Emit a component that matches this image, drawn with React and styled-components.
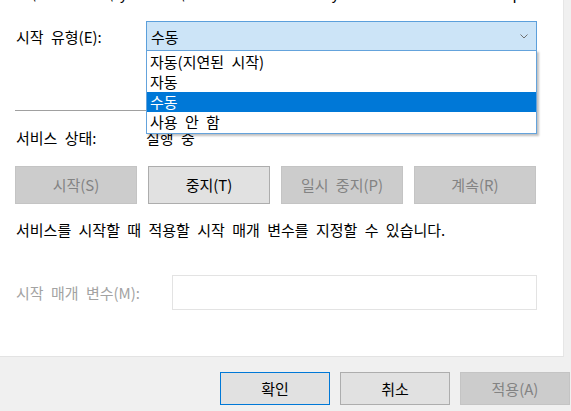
import styled, { createGlobalStyle } from "styled-components";

const GlobalStyle = createGlobalStyle`
  html, body {
    margin: 0;
    padding: 0;
    background: #f0f0f0;
  }
  body {
    font-family: "Noto Sans CJK KR", "Noto Sans", sans-serif;
    font-size: 15px;
    word-spacing: 4px;
    color: #000;
  }
`;

const startTypes = ["자동(지연된 시작)", "자동", "수동", "사용 안 함"];

const serviceButtons = [
  { label: "시작(S)", disabled: true },
  { label: "중지(T)", disabled: false },
  { label: "일시 중지(P)", disabled: true },
  { label: "계속(R)", disabled: true },
];

const App = () => {
  return (
    <>
      <GlobalStyle />
      <Window>
        <TabPage>
          <PathLine>C:\WINDOWS\system32\svchost.exe -k LocalSystemNetworkRestricted -p</PathLine>

          <FieldRow $top={18}>
            <Label>시작 유형(E):</Label>
            <Combo>
              <span>수동</span>
              <Chevron viewBox="0 0 8 5">
                <polyline points="0.5,0.5 4,4 7.5,0.5" />
              </Chevron>
              <DropList>
                {startTypes.map((t) => (
                  <DropItem key={t} $selected={t === "수동"}>
                    {t}
                  </DropItem>
                ))}
              </DropList>
            </Combo>
          </FieldRow>

          <Separator />

          <StatusRow>
            <Label>서비스 상태:</Label>
            <span>실행 중</span>
          </StatusRow>

          <ButtonRow>
            {serviceButtons.map((b) => (
              <ActionButton key={b.label} disabled={b.disabled}>
                {b.label}
              </ActionButton>
            ))}
          </ButtonRow>

          <Description>
            서비스를 시작할 때 적용할 시작 매개 변수를 지정할 수 있습니다.
          </Description>

          <FieldRow $top={35}>
            <Label $width={157} $muted>
              시작 매개 변수(M):
            </Label>
            <ParamInput />
          </FieldRow>
        </TabPage>

        <Footer>
          <DialogButton $primary>확인</DialogButton>
          <DialogButton>취소</DialogButton>
          <DialogButton disabled>적용(A)</DialogButton>
        </Footer>
      </Window>
    </>
  );
};

export default App;

/* ---------------- styled-components ---------------- */

const Window = styled.div`
  width: 571px;
  height: 411px;
  overflow: hidden;
  display: flex;
  flex-direction: column;
`;

const TabPage = styled.div`
  width: 564px;
  height: 357px;
  box-sizing: border-box;
  background: #fff;
  border-right: 1px solid #e6e6e6;
  border-bottom: 1px solid #e3e3e3;
  padding-left: 15px;
  display: flex;
  flex-direction: column;
  overflow: hidden;
  flex-shrink: 0;
`;

const PathLine = styled.div`
  margin-top: -17px;
  height: 20px;
  line-height: 20px;
  padding-left: 1px;
  white-space: nowrap;
  word-spacing: 0;
`;

const FieldRow = styled.div`
  display: flex;
  align-items: center;
  margin-top: ${(p) => p.$top}px;
`;

const Label = styled.div`
  width: ${(p) => p.$width || 131}px;
  flex-shrink: 0;
  padding-left: 1px;
  box-sizing: border-box;
  white-space: nowrap;
  color: ${(p) => (p.$muted ? "#a3a3a3" : "#000")};
`;

const Combo = styled.div`
  position: relative;
  width: 391px;
  height: 30px;
  box-sizing: border-box;
  border: 1px solid #5b9fdb;
  background: #cce4f7;
  display: flex;
  align-items: center;
  justify-content: space-between;
  padding: 0 8px 0 4px;
`;

const Chevron = styled.svg`
  width: 8px;
  height: 5px;
  fill: none;
  stroke: #707070;
  stroke-width: 1;
`;

const DropList = styled.div`
  position: absolute;
  top: 28px;
  left: -1px;
  right: -1px;
  background: #fff;
  border: 1px solid #64a3dc;
  box-shadow: 2px 2px 2px rgba(0, 0, 0, 0.25);
  padding: 1px 0;
  z-index: 2;
`;

const DropItem = styled.div`
  height: 20px;
  line-height: 20px;
  padding-left: 3px;
  white-space: nowrap;
  background: ${(p) => (p.$selected ? "#0078d7" : "transparent")};
  color: ${(p) => (p.$selected ? "#fff" : "#000")};
`;

const Separator = styled.div`
  margin-top: 59px;
  width: 522px;
  height: 1px;
  background: #a0a0a0;
`;

const StatusRow = styled.div`
  display: flex;
  margin-top: 17px;
  height: 20px;
  line-height: 20px;
`;

const ButtonRow = styled.div`
  display: grid;
  grid-template-columns: repeat(4, 122px);
  column-gap: 11px;
  margin-top: 18px;
`;

const ActionButton = styled.button`
  height: 38px;
  box-sizing: border-box;
  font-family: inherit;
  font-size: 15px;
  word-spacing: 4px;
  line-height: 20px;
  padding: 0;
  border: 1px solid ${(p) => (p.disabled ? "#c4c4c4" : "#adadad")};
  background: ${(p) => (p.disabled ? "#cccccc" : "#e1e1e1")};
  color: ${(p) => (p.disabled ? "#838383" : "#000")};
`;

const Description = styled.div`
  margin-top: 16px;
  line-height: 20px;
  padding-left: 1px;
  white-space: nowrap;
`;

const ParamInput = styled.div`
  width: 365px;
  height: 35px;
  box-sizing: border-box;
  border: 1px solid #e3e3e3;
  background: #fff;
`;

const Footer = styled.div`
  display: flex;
  justify-content: flex-end;
  gap: 10px;
  padding: 15px 1px 0 0;
`;

const DialogButton = styled.button`
  width: 110px;
  height: 33px;
  box-sizing: border-box;
  font-family: inherit;
  font-size: 15px;
  line-height: 20px;
  padding: 0;
  border: 1px solid
    ${(p) => (p.$primary ? "#0078d7" : p.disabled ? "#c4c4c4" : "#adadad")};
  background: ${(p) => (p.disabled ? "#cccccc" : "#e1e1e1")};
  color: ${(p) => (p.disabled ? "#838383" : "#000")};
`;
